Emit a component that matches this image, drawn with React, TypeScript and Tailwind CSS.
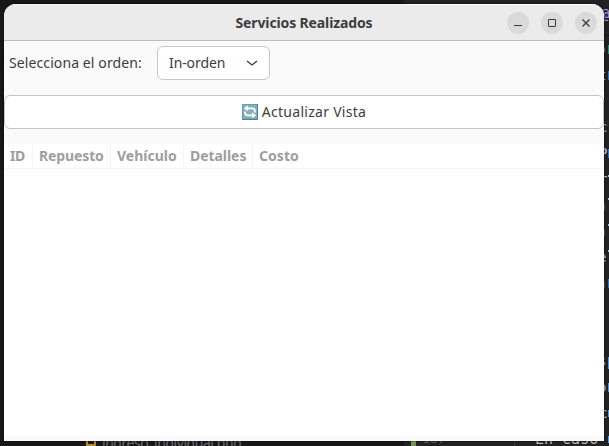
import type { ReactNode } from 'react';

const codeLines = [
  { top: 3, left: 601, text: '@', color: 'text-[#a79df0]' },
  { top: 38, left: 597, text: 'o', color: 'text-[#d9b440]' },
  { top: 64, left: 598, text: 't', color: 'text-[#d9c5ac]' },
  { top: 116, left: 599, text: 'c', color: 'text-[#d9b440]' },
  { top: 142, left: 599, text: 'P', color: 'text-[#b9d2e4]' },
  { top: 168, left: 599, text: 'r', color: 'text-[#b9d2e4]' },
  { top: 194, left: 597, text: 'a', color: 'text-[#b9d2e4]' },
  { top: 220, left: 597, text: 'a', color: 'text-[#b9d2e4]' },
  { top: 246, left: 598, text: 'e', color: 'text-[#b9d2e4]' },
  { top: 272, left: 597, text: 'a', color: 'text-[#b9d2e4]' },
  { top: 350, left: 598, text: 's', color: 'text-[#b9d2e4]' },
  { top: 376, left: 598, text: 'o', color: 'text-[#b9d2e4]' },
  { top: 402, left: 599, text: 'c', color: 'text-[#b9d2e4]' },
];

const edgeMarks = [
  'top-[45px] h-[9px] bg-[#23936f]',
  'top-[71px] h-[9px] bg-[#2877c8]',
  'top-[149px] h-[9px] bg-[#2877c8]',
  'top-[175px] h-[2px] bg-[#9cc5e8]',
  'top-[198px] h-[2px] bg-[#9cc5e8]',
  'top-[224px] h-[2px] bg-[#9cc5e8]',
  'top-[250px] h-[2px] bg-[#9cc5e8]',
  'top-[279px] h-[9px] bg-[#2877c8]',
  'top-[357px] h-[12px] bg-[#4c9be8]',
  'top-[383px] h-[9px] bg-[#4c9be8]',
  'top-[410px] h-[7px] bg-[#4c9be8]',
  'top-[436px] h-[7px] bg-[#4c9be8]',
];

function Editor() {
  return (
    <div className="absolute inset-0 overflow-hidden bg-[#1a1719] font-['DejaVu_Sans_Mono','Liberation_Mono',monospace] text-[14px] leading-[22px]">
      <div className="absolute left-[404px] top-0 h-[446px] w-[205px] bg-[#222225]" />
      <div className="absolute left-[604px] top-[35px] h-px w-[5px] bg-[#111113]" />
      {codeLines.map((line) => (
        <span key={line.top} className={`absolute whitespace-pre ${line.color}`} style={{ top: line.top, left: line.left }}>
          {line.text}
        </span>
      ))}
      {edgeMarks.map((mark) => (
        <span key={mark} className={`absolute left-[608px] w-px ${mark}`} />
      ))}
      <span className="absolute left-[86px] top-[437px] h-[9px] w-[10px] border-2 border-[#b68b2f]" />
      <span className="absolute left-[102px] top-[432px] whitespace-pre font-['Noto_Sans',sans-serif] text-[14px] tracking-[-0.45px] text-[#6b6e74]">ingreso_individual.png</span>
      <span className="absolute left-[411px] top-[437px] h-[9px] w-[5px] bg-[#729b4d]" />
      <span className="absolute left-[422px] top-[428px] text-[13px] text-[#5c5e62]">187</span>
      <span className="absolute left-[514px] top-[437px] h-[9px] w-px bg-[#3a3a3e]" />
      <span className="absolute left-[535px] top-[428px] whitespace-pre text-[15px] text-[#c5beb4]">En caso</span>
    </div>
  );
}

function WindowButton({ label, children }: { label: string; children: ReactNode }) {
  return (
    <button aria-label={label} className="flex size-[22px] items-center justify-center rounded-full bg-[#dadada]">
      <svg width="22" height="22" viewBox="0 0 22 22" fill="none" stroke="#3d3d3d">
        {children}
      </svg>
    </button>
  );
}

function TitleBar() {
  return (
    <header className="grid h-[37px] shrink-0 grid-cols-[1fr_auto_1fr] items-center border-b border-t border-b-[#bdbdbd] border-t-[#f7f7f7] bg-[#ebebeb]">
      <span />
      <h1 className="whitespace-nowrap text-[14px] font-bold leading-5 tracking-[-0.13px] text-[#3d3d3d]">Servicios Realizados</h1>
      <div className="flex justify-end gap-3 pr-[7px]">
        <WindowButton label="Minimizar">
          <path d="M7 13.5h8" />
        </WindowButton>
        <WindowButton label="Maximizar">
          <path d="M7.5 7.5h7v7h-7z" />
        </WindowButton>
        <WindowButton label="Cerrar">
          <path d="m7.5 7.5 7 7m0-7-7 7" strokeWidth="1.4" />
        </WindowButton>
      </div>
    </header>
  );
}

function RefreshIcon() {
  return (
    <svg width="16" height="16" viewBox="0 0 16 16" className="shrink-0">
      <rect width="16" height="16" fill="#557f93" />
      <rect width="15" height="15" fill="#6d9aad" />
      <rect x="1" y="1" width="14" height="13.5" fill="#84afc1" />
      <path d="M5 4.3h5.2q2.8 0 2.8 3V8.6M11 11.3H5.8Q3 11.3 3 8.5V7.4" fill="none" stroke="#fff" strokeWidth="1.7" />
      <path d="M5.8 1.3v6L1.8 4.3zM10.2 8.3v6l4-3z" fill="#fff" />
    </svg>
  );
}

const columns = [
  { name: 'ID', style: 'w-[29px] border-r tracking-[-0.4px]' },
  { name: 'Repuesto', style: 'w-[78px] border-r tracking-[-0.12px]' },
  { name: 'Vehículo', style: 'w-[73px] border-r tracking-[0px]' },
  { name: 'Detalles', style: 'w-[69px] border-r tracking-[-0.05px]' },
  { name: 'Costo', style: 'grow tracking-[0.05px]' },
];

export default function App() {
  return (
    <div className="relative h-[446px] w-[609px] overflow-hidden font-['Noto_Sans',sans-serif] text-[#3d3d3d]">
      <Editor />
      <div className="relative ml-1 pt-1">
        <main className="flex h-[437px] w-[600px] flex-col overflow-hidden rounded-t-[12px] bg-[#fafafa] shadow-[0_0_2px_#000]">
          <TitleBar />
          <div className="flex h-[54px] items-start pl-[5px] pt-[5px]">
            <span className="w-[148px] whitespace-nowrap text-[14px] leading-[34px] tracking-[0.1px]">Selecciona el orden:</span>
            <button className="flex h-[34px] w-[113px] items-center justify-between rounded-[6px] border border-[#c6c6c6] bg-white pl-[11px] pr-[11px]">
              <span className="text-[14px] leading-8 tracking-[-0.1px]">In-orden</span>
              <svg width="12" height="8" viewBox="0 0 12 8" fill="none" stroke="#3d3d3d" strokeWidth="1.3">
                <path d="m1 2 5 4 5-4" />
              </svg>
            </button>
          </div>
          <button className="flex h-[34px] w-full shrink-0 items-center justify-center gap-[4px] rounded-[6px] border border-[#c6c6c6] bg-white">
            <RefreshIcon />
            <span className="text-[14px] leading-8 tracking-[0.28px]">Actualizar Vista</span>
          </button>
          <div className="mt-[15px] h-[292px] bg-white">
            <div className="flex h-[25px] border-b border-[#f5f5f5] text-[14px] font-bold leading-6 text-[#9e9e9e]">
              {columns.map((column) => (
                <div key={column.name} className={`shrink-0 whitespace-nowrap border-[#f5f5f5] pl-[6px] ${column.style}`}>
                  {column.name}
                </div>
              ))}
            </div>
          </div>
        </main>
      </div>
    </div>
  );
}
